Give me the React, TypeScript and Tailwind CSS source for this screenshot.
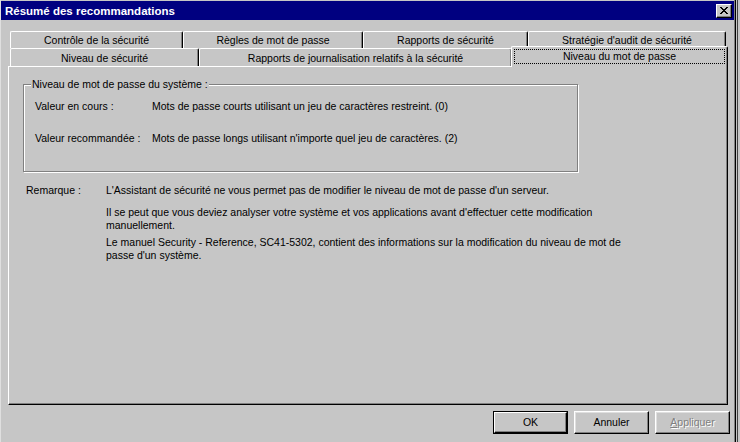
import React from "react";

const tabBase =
  "relative flex items-center justify-center bg-[#c6c6c6] border-l border-t border-r border-l-white border-t-white border-r-black rounded-tl-[2px] rounded-tr-[2px] shadow-[inset_-1px_0_0_#808080] whitespace-nowrap";

function Tab({ label, w }: { label: string; w: number }) {
  return (
    <div className={tabBase + " h-full"} style={{ width: w }}>
      <span className="mt-[1px]">{label}</span>
    </div>
  );
}

function CloseX() {
  const px: [number, number][] = [];
  const rows = [
    "XX....XX",
    ".XX..XX.",
    "..XXXX..",
    "...XX...",
    "..XXXX..",
    ".XX..XX.",
    "XX....XX",
  ];
  rows.forEach((r, y) =>
    r.split("").forEach((c, x) => {
      if (c === "X") px.push([x, y]);
    })
  );
  const d = px.map(([x, y]) => `M${x} ${y}h1v1h-1z`).join("");
  return (
    <svg width="8" height="7" viewBox="0 0 8 7" shapeRendering="crispEdges">
      <path d={d} fill="#000" />
    </svg>
  );
}

function Button({
  children,
  def,
  disabled,
}: {
  children: React.ReactNode;
  def?: boolean;
  disabled?: boolean;
}) {
  if (def) {
    return (
      <div className="w-[75px] h-[23px] border border-black flex">
        <div className="flex-1 flex items-center justify-center border-t border-l border-b border-r border-t-white border-l-white border-b-black border-r-black shadow-[inset_-1px_-1px_0_#808080]">
          {children}
        </div>
      </div>
    );
  }
  return (
    <div
      className={
        "w-[75px] h-[23px] flex items-center justify-center border-t border-l border-b border-r border-t-white border-l-white border-b-black border-r-black shadow-[inset_-1px_-1px_0_#808080,inset_1px_1px_0_#dfdfdf] " +
        (disabled ? "text-[#808080] [text-shadow:1px_1px_0_#fff]" : "")
      }
    >
      {children}
    </div>
  );
}

export default function App() {
  return (
    <div className="w-[740px] h-[442px] bg-[#c6c6c6] flex overflow-hidden font-['Liberation_Sans',Arial,sans-serif] text-[10.5px] leading-[13px] text-black">
      {/* dialog */}
      <div className="w-[736px] h-full flex flex-col border-l border-l-[#dfdfdf] border-r border-r-black shadow-[inset_-1px_0_0_#808080]">
        {/* title bar */}
        <div className="mt-[1px] w-[733px] h-[19px] bg-[#000080] flex items-center justify-between pl-[4px] pr-[2px]">
          <span className="text-white font-bold text-[11.5px] leading-[14px]">
            Résumé des recommandations
          </span>
          <div className="w-[16px] h-[14px] bg-[#c6c6c6] flex items-center justify-center border-t border-l border-b border-r border-t-white border-l-white border-b-black border-r-black shadow-[inset_-1px_-1px_0_#808080]">
            <CloseX />
          </div>
        </div>

        {/* tab row 1 */}
        <div className="mt-[11px] ml-[9px] h-[17px] flex">
          <Tab label="Contrôle de la sécurité" w={173} />
          <Tab label="Règles de mot de passe" w={180} />
          <Tab label="Rapports de sécurité" w={165} />
          <Tab label="Stratégie d'audit de sécurité" w={198} />
        </div>
        {/* tab row 2 */}
        <div className="ml-[9px] h-[18px] flex items-start">
          <Tab label="Niveau de sécurité" w={189} />
          <Tab label="Rapports de journalisation relatifs à la sécurité" w={313} />
          <div
            className={
              tabBase +
              " z-10 -mt-[2px] h-[21px] w-[217px] -ml-[1px] items-start pt-[2px] px-[2px]"
            }
          >
            <div className="w-full h-[15px] flex items-center justify-center border border-dotted border-black">
              Niveau du mot de passe
            </div>
          </div>
        </div>

        {/* panel */}
        <div className="ml-[7px] w-[720px] h-[339px] border-t border-l border-r border-b border-t-white border-l-white border-r-black border-b-black shadow-[inset_-1px_-1px_0_#808080] flex flex-col pl-[14px] pt-[17px]">
          {/* group box */}
          <div className="relative w-[555px] h-[88px] border border-[#808080] shadow-[inset_1px_1px_0_#fff,1px_1px_0_#fff] flex flex-col pl-[11px] pt-[15px]">
            <span className="absolute -top-[7px] left-[7px] bg-[#c6c6c6] px-[1px]">
              Niveau de mot de passe du système :
            </span>
            <div className="flex">
              <span className="w-[117px]">Valeur en cours :</span>
              <span>Mots de passe courts utilisant un jeu de caractères restreint. (0)</span>
            </div>
            <div className="flex mt-[19px]">
              <span className="w-[117px]">Valeur recommandée :</span>
              <span>Mots de passe longs utilisant n'importe quel jeu de caractères. (2)</span>
            </div>
          </div>

          {/* remarque */}
          <div className="flex mt-[12px] pl-[3px]">
            <span className="w-[80px] shrink-0">Remarque :</span>
            <div className="flex flex-col whitespace-nowrap">
              <span>
                L'Assistant de sécurité ne vous permet pas de modifier le niveau de mot de passe d'un serveur.
              </span>
              <span className="mt-[9px]">
                Il se peut que vous deviez analyser votre système et vos applications avant d'effectuer cette modification
                <br />
                manuellement.
              </span>
              <span className="mt-[4px]">
                Le manuel Security - Reference, SC41-5302, contient des informations sur la modification du niveau de mot de
                <br />
                passe d'un système.
              </span>
            </div>
          </div>
        </div>

        {/* buttons */}
        <div className="mt-[6px] flex justify-end gap-[6px] pr-[5px]">
          <Button def>OK</Button>
          <Button>Annuler</Button>
          <Button disabled>
            <span>
              <span className="underline">A</span>ppliquer
            </span>
          </Button>
        </div>
      </div>
      {/* neighbouring window edge */}
      <div className="w-[4px] h-full flex">
        <div className="w-[1px] h-full bg-[#c6c6c6]" />
        <div className="w-[1px] h-full bg-[#404040]" />
        <div className="w-[2px] h-full bg-[#c6c6c6]" />
      </div>
    </div>
  );
}
